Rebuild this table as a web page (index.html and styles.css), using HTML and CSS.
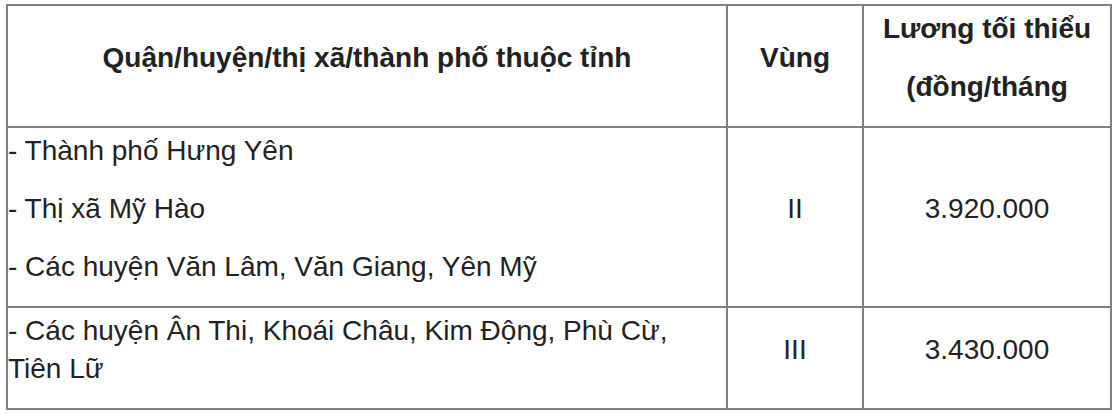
FILE: index.html
```html
<!DOCTYPE html>
<html lang="vi">
<head>
<meta charset="utf-8">
<title>Lương tối thiểu vùng - Hưng Yên</title>
<link rel="stylesheet" href="styles.css">
</head>
<body>
<table class="wage-table">
  <colgroup>
    <col class="col-area">
    <col class="col-zone">
    <col class="col-wage">
  </colgroup>
  <thead>
    <tr>
      <th><p>Quận/huyện/thị xã/thành phố thuộc tỉnh</p></th>
      <th><p>Vùng</p></th>
      <th><p>Lương tối thiểu</p><p>(đồng/tháng</p></th>
    </tr>
  </thead>
  <tbody>
    <tr>
      <td class="area"><p>- Thành phố Hưng Yên</p><p>- Thị xã Mỹ Hào</p><p>- Các huyện Văn Lâm, Văn Giang, Yên Mỹ</p></td>
      <td class="center"><p>II</p></td>
      <td class="center"><p>3.920.000</p></td>
    </tr>
    <tr>
      <td class="area"><p>- Các huyện Ân Thi, Khoái Châu, Kim Động, Phù Cừ, Tiên Lữ</p></td>
      <td class="center"><p>III</p></td>
      <td class="center"><p>3.430.000</p></td>
    </tr>
  </tbody>
</table>
</body>
</html>
```

FILE: styles.css
```css
html, body {
  margin: 0;
  padding: 0;
  background: #ffffff;
}

body {
  padding: 4px 0 0 6px;
  font-family: "Liberation Sans", Arial, Helvetica, sans-serif;
  font-size: 28px;
  line-height: 38px;
  color: #222222;
}

.wage-table {
  border-collapse: collapse;
  table-layout: fixed;
  width: 1106px;
}

.col-area { width: 720px; }
.col-zone { width: 136px; }
.col-wage { width: 248px; }

.wage-table th,
.wage-table td {
  border: 2px solid #808080;
  padding: 4px 0 0 0;
  vertical-align: middle;
}

.wage-table th {
  font-weight: bold;
  text-align: center;
  color: #222222;
}

.wage-table p {
  margin: 0 0 20px 0;
}

.area {
  text-align: left;
}

.center {
  text-align: center;
}
```
